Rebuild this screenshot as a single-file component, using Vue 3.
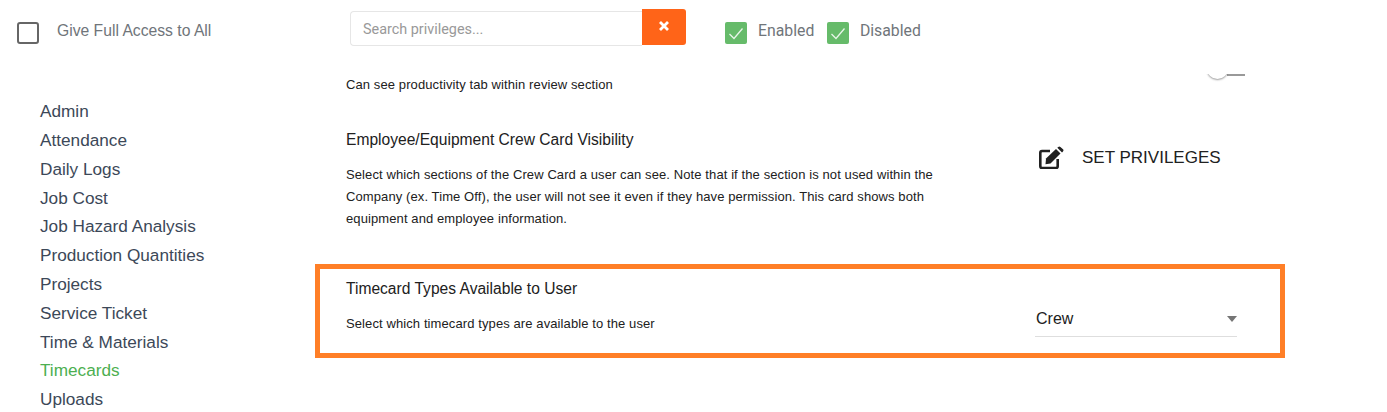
<template>
  <div class="page">
    <header class="top-bar">
      <label class="full-access">
        <span class="box"></span>
        <span class="full-label">Give Full Access to All</span>
      </label>
      <div class="search">
        <input class="search-input" placeholder="Search privileges..." />
        <button class="clear-btn">
          <svg width="10" height="10" viewBox="0 0 10 10">
            <path d="M1 1l8 8M9 1l-8 8" stroke="#fff" stroke-width="2.8" fill="none" />
          </svg>
        </button>
      </div>
      <div class="legend">
        <div v-for="item in legend" :key="item" class="legend-item">
          <span class="check">
            <svg width="22" height="22" viewBox="0 0 22 22">
              <path d="M4.5 12l4.5 4.5 8.5-10" stroke="#e8f5e9" stroke-width="1.3" fill="none" />
            </svg>
          </span>
          <span class="legend-label">{{ item }}</span>
        </div>
      </div>
    </header>

    <div class="main">
      <ul class="side-nav">
        <li v-for="link in links" :key="link" :class="{ active: link === 'Timecards' }">{{ link }}</li>
      </ul>

      <section class="content">
        <div class="row first-row">
          <p class="desc">Can see productivity tab within review section</p>
          <div class="switch">
            <span class="track"></span>
            <span class="knob"></span>
          </div>
        </div>

        <div class="row card-row">
          <div class="text">
            <h3 class="title">Employee/Equipment Crew Card Visibility</h3>
            <p class="desc long">
              Select which sections of the Crew Card a user can see. Note that if the section is not used within the
              Company (ex. Time Off), the user will not see it even if they have permission. This card shows both
              equipment and employee information.
            </p>
          </div>
          <div class="set-privileges">
            <svg width="25" height="23" viewBox="0 0 25 23">
              <path d="M11 5H3a1.7 1.7 0 0 0-1.7 1.7v13.6A1.7 1.7 0 0 0 3 22h14a1.7 1.7 0 0 0 1.7-1.7V13" stroke="#212121" stroke-width="2.6" fill="none" />
              <path d="M7 12.5L17 3l4.5 4.5-10 10-5 .8z" fill="#212121" />
              <path d="M18.3 1.8l1-.9a1.5 1.5 0 0 1 2.1 0l2.6 2.4a1.5 1.5 0 0 1 0 2.1l-1 1z" fill="#212121" />
            </svg>
            <span class="set-label">SET PRIVILEGES</span>
          </div>
        </div>

        <div class="row highlight">
          <div class="text">
            <h3 class="title">Timecard Types Available to User</h3>
            <p class="desc">Select which timecard types are available to the user</p>
          </div>
          <div class="select">
            <span>Crew</span>
            <span class="caret"></span>
          </div>
        </div>
      </section>
    </div>
  </div>
</template>

<script setup>
const legend = ['Enabled', 'Disabled']
const links = [
  'Admin',
  'Attendance',
  'Daily Logs',
  'Job Cost',
  'Job Hazard Analysis',
  'Production Quantities',
  'Projects',
  'Service Ticket',
  'Time & Materials',
  'Timecards',
  'Uploads'
]
</script>

<style>
html, body {
  margin: 0;
  background: #fff;
  overflow: hidden;
}
</style>

<style scoped>
.page {
  width: 1387px;
  height: 412px;
  overflow: hidden;
  font-family: "Liberation Sans", Arial, sans-serif;
}

.top-bar {
  display: flex;
  align-items: flex-start;
  height: 74px;
  box-sizing: border-box;
}

.full-access {
  display: flex;
  width: 350px;
  padding: 22px 0 0 17px;
  box-sizing: border-box;
}

.box {
  width: 22px;
  height: 22px;
  box-sizing: border-box;
  border: 2px solid #666;
  border-radius: 3px;
}

.full-label {
  margin-left: 18px;
  font-size: 15.7px;
  line-height: 18px;
  color: #70757a;
}

.search {
  display: flex;
  margin-top: 9px;
  width: 336px;
}

.search-input {
  width: 292px;
  height: 35px;
  margin-top: 2px;
  padding: 2px 12px 0;
  box-sizing: border-box;
  border: 1px solid #e6e6e6;
  border-right: none;
  border-radius: 4px 0 0 4px;
  outline: none;
  font-family: Roboto, sans-serif;
  font-size: 14.4px;
}

.search-input::placeholder {
  color: #999;
}

.clear-btn {
  width: 44px;
  height: 36px;
  padding: 0 0 3px;
  border: none;
  border-radius: 0 3px 3px 0;
  background: #ff6418;
  display: flex;
  align-items: center;
  justify-content: center;
}

.legend {
  display: flex;
  margin-left: 39px;
  margin-top: 22px;
  gap: 12.6px;
}

.legend-item {
  display: flex;
}

.check {
  width: 22px;
  height: 22px;
  border-radius: 2px;
  background: #66bb6a;
}

.legend-label {
  margin-left: 11px;
  font-family: Roboto, sans-serif;
  font-size: 15.8px;
  line-height: 18px;
  color: #70757a;
}

.main {
  display: flex;
}

.side-nav {
  list-style: none;
  margin: 23.3px 0 0;
  padding: 0 0 0 40px;
  width: 315px;
  box-sizing: border-box;
  font-size: 17.2px;
  line-height: 28.8px;
  color: #3c4858;
}

.side-nav .active {
  color: #4caf50;
}

.content {
  width: 970px;
  overflow: hidden;
}

.row {
  display: flex;
  justify-content: space-between;
}

.first-row {
  height: 50px;
  padding: 0 40px 0 31px;
}

.desc {
  margin: 0;
  font-size: 13px;
  line-height: 22px;
  letter-spacing: 0.1px;
  color: #212121;
}

.long {
  width: 600px;
  margin-top: 15px;
}

.switch {
  position: relative;
  width: 50px;
  height: 6px;
}

.track {
  position: absolute;
  left: 32px;
  top: 0;
  width: 18px;
  height: 2px;
  background: #999;
}

.knob {
  position: absolute;
  left: 12px;
  top: -16px;
  width: 21px;
  height: 21px;
  border-radius: 50%;
  background: #fff;
  box-shadow: 0 1px 2px rgba(0, 0, 0, 0.4);
}

.card-row {
  padding: 0 47px 0 31px;
  height: 140px;
}

.title {
  margin: 6px 0 0;
  font-size: 15.6px;
  font-weight: 400;
  line-height: 19px;
  color: #212121;
}

.set-privileges {
  display: flex;
  align-items: center;
  gap: 18px;
  width: 199px;
  height: 30px;
  margin-top: 18px;
  font-size: 17px;
  color: #212121;
}

.set-label {
  margin-top: 2px;
}

.highlight {
  height: 94px;
  box-sizing: border-box;
  border: 5px solid #ff7f27;
  padding: 4px 43px 0 26px;
}

.highlight .desc {
  margin-top: 15px;
}

.select {
  display: flex;
  align-items: center;
  justify-content: space-between;
  width: 201px;
  height: 27px;
  margin-top: 32px;
  padding: 0 0 4px 1px;
  border-bottom: 1px solid #dedede;
  font-size: 16px;
  color: #212121;
}

.caret {
  width: 0;
  height: 0;
  border-left: 5px solid transparent;
  border-right: 5px solid transparent;
  border-top: 6px solid #757575;
}
</style>
